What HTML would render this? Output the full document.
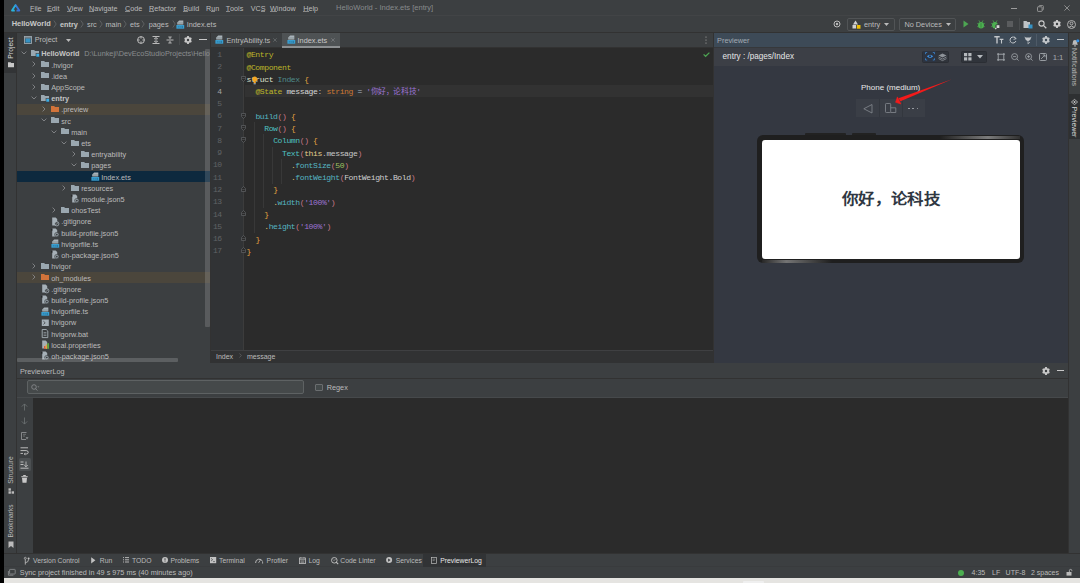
<!DOCTYPE html>
<html lang="zh-CN"><head><meta charset="utf-8">
<style>
*{margin:0;padding:0;box-sizing:border-box}
html,body{width:1080px;height:583px;overflow:hidden;background:#3c3f41}
body{position:relative;font-family:"Liberation Sans",sans-serif;font-size:7.3px;color:#bbbbbb}
.a{position:absolute}
.t{position:absolute;white-space:nowrap}
.mono{font-family:"Liberation Mono",monospace}
svg{position:absolute;overflow:visible}
u{text-decoration:none;position:relative}u:after{content:'';position:absolute;left:0;right:0;bottom:0.9px;height:0.6px;background:#8a8a8a}
</style></head><body>

<div class="a" style="left:0px;top:0px;width:4.3px;height:583px;background:#000;"></div>
<div class="a" style="left:4px;top:0px;width:1076px;height:16px;background:#3c3f41;"></div>
<div class="a" style="left:4px;top:15px;width:1076px;height:1.6px;background:#424446;"></div>
<div class="a" style="left:4px;top:16px;width:1076px;height:16px;background:#3c3f41;"></div>
<div class="a" style="left:4px;top:32px;width:1076px;height:1px;background:#323232;"></div>
<div class="a" style="left:4px;top:33px;width:12px;height:520px;background:#3c3f41;"></div>
<div class="a" style="left:4px;top:33px;width:12px;height:40px;background:#323436;"></div>
<div class="a" style="left:16px;top:33px;width:1px;height:520px;background:#323232;"></div>
<div class="a" style="left:1068px;top:33px;width:12px;height:520px;background:#3c3f41;"></div>
<div class="a" style="left:1068px;top:33px;width:1px;height:520px;background:#323232;"></div>
<div class="a" style="left:1069px;top:94px;width:11px;height:45px;background:#2e3032;"></div>
<div class="a" style="left:17px;top:33px;width:193px;height:14px;background:#3c3f41;"></div>
<div class="a" style="left:17px;top:47px;width:193px;height:316px;background:#3c3f41;"></div>
<div class="a" style="left:210px;top:33px;width:1px;height:330px;background:#323232;"></div>
<div class="a" style="left:211px;top:33px;width:502px;height:14px;background:#3c3f41;"></div>
<div class="a" style="left:211px;top:47px;width:502px;height:1px;background:#323232;"></div>
<div class="a" style="left:211px;top:48px;width:502px;height:302px;background:#2b2b2b;"></div>
<div class="a" style="left:211px;top:48px;width:33px;height:302px;background:#313335;"></div>
<div class="a" style="left:243px;top:48px;width:1px;height:302px;background:#3c3c3c;"></div>
<div class="a" style="left:211px;top:350px;width:502px;height:1px;background:#3f4042;"></div>
<div class="a" style="left:211px;top:351px;width:502px;height:12.5px;background:#313233;"></div>
<div class="a" style="left:713px;top:33px;width:1px;height:330px;background:#323232;"></div>
<div class="a" style="left:714px;top:33px;width:354px;height:14px;background:#3d4a57;"></div>
<div class="a" style="left:714px;top:47px;width:354px;height:18px;background:#3c3f41;"></div>
<div class="a" style="left:714px;top:65px;width:354px;height:298.5px;background:#343841;"></div>
<div class="a" style="left:17px;top:363px;width:1051px;height:15px;background:#3c3f41;"></div>
<div class="a" style="left:17px;top:378px;width:1051px;height:1px;background:#323232;"></div>
<div class="a" style="left:17px;top:379px;width:1051px;height:18px;background:#3c3f41;"></div>
<div class="a" style="left:17px;top:397px;width:1051px;height:1px;background:#46494b;"></div>
<div class="a" style="left:17px;top:398px;width:16px;height:155px;background:#3c3f41;"></div>
<div class="a" style="left:33px;top:398px;width:1035px;height:155px;background:#2b2b2b;"></div>
<div class="a" style="left:4px;top:553px;width:1076px;height:1px;background:#323232;"></div>
<div class="a" style="left:4px;top:554px;width:1076px;height:13px;background:#3c3f41;"></div>
<div class="a" style="left:4px;top:566.3px;width:1076px;height:0.8px;background:#393b3d;"></div>
<div class="a" style="left:4px;top:567px;width:1076px;height:11px;background:#3c3f41;"></div>
<div class="a" style="left:4px;top:577.6px;width:1076px;height:0.8px;background:#2e3032;"></div>
<div class="a" style="left:4px;top:578.3px;width:1076px;height:4.7px;background:#e5e4e1;"></div>
<div class="a" style="left:743px;top:581px;width:20.7px;height:2px;background:#efefef;border-radius:1px 1px 0 0"></div>
<div class="a" style="left:0;top:0;width:210px;height:363px;overflow:hidden">
<div class="a" style="left:17px;top:103.85px;width:193px;height:11.1px;background:#4b463c;"></div>
<div class="a" style="left:17px;top:171.11px;width:193px;height:11.1px;background:#0d293e;"></div>
<div class="a" style="left:17px;top:272.00000000000006px;width:193px;height:11.1px;background:#4b463c;"></div>
<div class="a" style="left:205.3px;top:49px;width:4.4px;height:278px;background:rgba(255,255,255,0.15);border-radius:1px"></div>
<svg style="left:20.8px;top:51.099999999999994px;" width="6" height="4" viewBox="0 0 6 4"><path d="M0.6 0.6 L3 3 L5.4 0.6" fill="none" stroke="#8f9194" stroke-width="0.8"/></svg>
<svg style="left:31px;top:49.0px;" width="9" height="9" viewBox="0 0 9 9"><path d="M0 1 H3.2 L4 2 H8 V7 H0 Z" fill="#9aa7b0"/><rect x="5" y="4.6" width="3.4" height="3.4" fill="#3ab0e8" stroke="#3c3f41" stroke-width="0.6"/></svg>
<div class="t" style="left:41.20px;top:50.32px;font-size:7.3px;line-height:7.3px;color:#c4c4c4;"><b>HelloWorld</b></div>
<div class="t" style="left:84.20px;top:50.32px;font-size:7.3px;line-height:7.3px;color:#8a8d8f;">D:\Lunkeji\DevEcoStudioProjects\HelloWorld</div>
<svg style="left:31.8px;top:61.410000000000004px;" width="4" height="6" viewBox="0 0 4 6"><path d="M0.6 0.6 L3 3 L0.6 5.4" fill="none" stroke="#8f9194" stroke-width="0.8"/></svg>
<svg style="left:41px;top:60.21px;" width="9" height="9" viewBox="0 0 9 9"><path d="M0 1 H3.2 L4 2 H8 V7 H0 Z" fill="#9aa7b0"/></svg>
<div class="t" style="left:51.20px;top:61.53px;font-size:7.3px;line-height:7.3px;color:#bbbbbb;">.hvigor</div>
<svg style="left:31.8px;top:72.62px;" width="4" height="6" viewBox="0 0 4 6"><path d="M0.6 0.6 L3 3 L0.6 5.4" fill="none" stroke="#8f9194" stroke-width="0.8"/></svg>
<svg style="left:41px;top:71.41999999999999px;" width="9" height="9" viewBox="0 0 9 9"><path d="M0 1 H3.2 L4 2 H8 V7 H0 Z" fill="#9aa7b0"/></svg>
<div class="t" style="left:51.20px;top:72.74px;font-size:7.3px;line-height:7.3px;color:#bbbbbb;">.idea</div>
<svg style="left:31.8px;top:83.83000000000001px;" width="4" height="6" viewBox="0 0 4 6"><path d="M0.6 0.6 L3 3 L0.6 5.4" fill="none" stroke="#8f9194" stroke-width="0.8"/></svg>
<svg style="left:41px;top:82.63px;" width="9" height="9" viewBox="0 0 9 9"><path d="M0 1 H3.2 L4 2 H8 V7 H0 Z" fill="#9aa7b0"/></svg>
<div class="t" style="left:51.20px;top:83.95px;font-size:7.3px;line-height:7.3px;color:#bbbbbb;">AppScope</div>
<svg style="left:30.8px;top:95.94000000000001px;" width="6" height="4" viewBox="0 0 6 4"><path d="M0.6 0.6 L3 3 L5.4 0.6" fill="none" stroke="#8f9194" stroke-width="0.8"/></svg>
<svg style="left:41px;top:93.84px;" width="9" height="9" viewBox="0 0 9 9"><path d="M0 1 H3.2 L4 2 H8 V7 H0 Z" fill="#9aa7b0"/><rect x="5" y="4.6" width="3.4" height="3.4" fill="#3ab0e8" stroke="#3c3f41" stroke-width="0.6"/></svg>
<div class="t" style="left:51.20px;top:95.16px;font-size:7.3px;line-height:7.3px;color:#c4c4c4;"><b>entry</b></div>
<svg style="left:41.8px;top:106.25000000000001px;" width="4" height="6" viewBox="0 0 4 6"><path d="M0.6 0.6 L3 3 L0.6 5.4" fill="none" stroke="#8f9194" stroke-width="0.8"/></svg>
<svg style="left:51px;top:105.05px;" width="9" height="9" viewBox="0 0 9 9"><path d="M0 1 H3.2 L4 2 H8 V7 H0 Z" fill="#d2733a"/></svg>
<div class="t" style="left:61.20px;top:106.37px;font-size:7.3px;line-height:7.3px;color:#bbbbbb;">.preview</div>
<svg style="left:40.8px;top:118.36px;" width="6" height="4" viewBox="0 0 6 4"><path d="M0.6 0.6 L3 3 L5.4 0.6" fill="none" stroke="#8f9194" stroke-width="0.8"/></svg>
<svg style="left:51px;top:116.25999999999999px;" width="9" height="9" viewBox="0 0 9 9"><path d="M0 1 H3.2 L4 2 H8 V7 H0 Z" fill="#9aa7b0"/></svg>
<div class="t" style="left:61.20px;top:117.58px;font-size:7.3px;line-height:7.3px;color:#bbbbbb;">src</div>
<svg style="left:50.8px;top:129.57000000000002px;" width="6" height="4" viewBox="0 0 6 4"><path d="M0.6 0.6 L3 3 L5.4 0.6" fill="none" stroke="#8f9194" stroke-width="0.8"/></svg>
<svg style="left:61px;top:127.47px;" width="9" height="9" viewBox="0 0 9 9"><path d="M0 1 H3.2 L4 2 H8 V7 H0 Z" fill="#9aa7b0"/></svg>
<div class="t" style="left:71.20px;top:128.79px;font-size:7.3px;line-height:7.3px;color:#bbbbbb;">main</div>
<svg style="left:60.8px;top:140.78000000000003px;" width="6" height="4" viewBox="0 0 6 4"><path d="M0.6 0.6 L3 3 L5.4 0.6" fill="none" stroke="#8f9194" stroke-width="0.8"/></svg>
<svg style="left:71px;top:138.68px;" width="9" height="9" viewBox="0 0 9 9"><path d="M0 1 H3.2 L4 2 H8 V7 H0 Z" fill="#9aa7b0"/></svg>
<div class="t" style="left:81.20px;top:140.00px;font-size:7.3px;line-height:7.3px;color:#bbbbbb;">ets</div>
<svg style="left:71.8px;top:151.09000000000003px;" width="4" height="6" viewBox="0 0 4 6"><path d="M0.6 0.6 L3 3 L0.6 5.4" fill="none" stroke="#8f9194" stroke-width="0.8"/></svg>
<svg style="left:81px;top:149.89000000000001px;" width="9" height="9" viewBox="0 0 9 9"><path d="M0 1 H3.2 L4 2 H8 V7 H0 Z" fill="#9aa7b0"/></svg>
<div class="t" style="left:91.20px;top:151.21px;font-size:7.3px;line-height:7.3px;color:#bbbbbb;">entryability</div>
<svg style="left:70.8px;top:163.20000000000002px;" width="6" height="4" viewBox="0 0 6 4"><path d="M0.6 0.6 L3 3 L5.4 0.6" fill="none" stroke="#8f9194" stroke-width="0.8"/></svg>
<svg style="left:81px;top:161.1px;" width="9" height="9" viewBox="0 0 9 9"><path d="M0 1 H3.2 L4 2 H8 V7 H0 Z" fill="#9aa7b0"/></svg>
<div class="t" style="left:91.20px;top:162.42px;font-size:7.3px;line-height:7.3px;color:#bbbbbb;">pages</div>
<svg style="left:91px;top:172.01px;" width="9" height="10" viewBox="0 0 9 10"><path d="M3.2 0.6 H7.3 V4.6 H1.2 V2.5 Z" fill="#a9b3ba"/><path d="M1.5 2.6 H7 M1.5 3.7 H7" stroke="#7b858c" stroke-width="0.4"/><rect x="0.4" y="5" width="7.8" height="3.7" fill="#3a9fd1"/><path d="M1.8 6.9 H3.2 M4.2 6.3 V7.6 M5.6 6.4 H6.9 M5.6 7.4 H6.9" stroke="#1f5c7c" stroke-width="0.6"/></svg>
<div class="t" style="left:101.20px;top:173.63px;font-size:7.3px;line-height:7.3px;color:#bbbbbb;">Index.ets</div>
<svg style="left:61.8px;top:184.72000000000003px;" width="4" height="6" viewBox="0 0 4 6"><path d="M0.6 0.6 L3 3 L0.6 5.4" fill="none" stroke="#8f9194" stroke-width="0.8"/></svg>
<svg style="left:71px;top:183.52px;" width="9" height="9" viewBox="0 0 9 9"><path d="M0 1 H3.2 L4 2 H8 V7 H0 Z" fill="#9aa7b0"/></svg>
<div class="t" style="left:81.20px;top:184.84px;font-size:7.3px;line-height:7.3px;color:#bbbbbb;">resources</div>
<svg style="left:71px;top:194.43px;" width="9" height="10" viewBox="0 0 9 10"><path d="M1.2 0.5 H4.6 L6.2 2.1 V8.6 H1.2 Z" fill="#a6b0b7"/><path d="M1.2 0.5 V2.6 H0" stroke="#3c3f41" stroke-width="0.5"/><circle cx="5.8" cy="6.6" r="2.2" fill="#8e989f" stroke="#3c3f41" stroke-width="0.6"/><circle cx="5.8" cy="6.6" r="0.9" fill="#3c3f41"/></svg>
<div class="t" style="left:81.20px;top:196.05px;font-size:7.3px;line-height:7.3px;color:#bbbbbb;">module.json5</div>
<svg style="left:51.8px;top:207.14000000000001px;" width="4" height="6" viewBox="0 0 4 6"><path d="M0.6 0.6 L3 3 L0.6 5.4" fill="none" stroke="#8f9194" stroke-width="0.8"/></svg>
<svg style="left:61px;top:205.94px;" width="9" height="9" viewBox="0 0 9 9"><path d="M0 1 H3.2 L4 2 H8 V7 H0 Z" fill="#9aa7b0"/></svg>
<div class="t" style="left:71.20px;top:207.26px;font-size:7.3px;line-height:7.3px;color:#bbbbbb;">ohosTest</div>
<svg style="left:51px;top:216.85px;" width="9" height="10" viewBox="0 0 9 10"><path d="M1.2 0.5 H4.6 L6.2 2.1 V8.6 H1.2 Z" fill="#a6b0b7"/><circle cx="5.8" cy="6.8" r="2.1" fill="#3c3f41" stroke="#a6b0b7" stroke-width="0.8"/><path d="M4.5 8 L7.1 5.6" stroke="#a6b0b7" stroke-width="0.7"/></svg>
<div class="t" style="left:61.20px;top:218.47px;font-size:7.3px;line-height:7.3px;color:#bbbbbb;">.gitignore</div>
<svg style="left:51px;top:228.06px;" width="9" height="10" viewBox="0 0 9 10"><path d="M1.2 0.5 H4.6 L6.2 2.1 V8.6 H1.2 Z" fill="#a6b0b7"/><path d="M1.2 0.5 V2.6 H0" stroke="#3c3f41" stroke-width="0.5"/><circle cx="5.8" cy="6.6" r="2.2" fill="#8e989f" stroke="#3c3f41" stroke-width="0.6"/><circle cx="5.8" cy="6.6" r="0.9" fill="#3c3f41"/></svg>
<div class="t" style="left:61.20px;top:229.68px;font-size:7.3px;line-height:7.3px;color:#bbbbbb;">build-profile.json5</div>
<svg style="left:51px;top:239.27px;" width="9" height="10" viewBox="0 0 9 10"><path d="M3.2 0.6 H7.3 V4.6 H1.2 V2.5 Z" fill="#a9b3ba"/><path d="M1.5 2.6 H7 M1.5 3.7 H7" stroke="#7b858c" stroke-width="0.4"/><rect x="0.4" y="5" width="7.8" height="3.7" fill="#3a9fd1"/><path d="M1.8 6.9 H3.2 M4.2 6.3 V7.6 M5.6 6.4 H6.9 M5.6 7.4 H6.9" stroke="#1f5c7c" stroke-width="0.6"/></svg>
<div class="t" style="left:61.20px;top:240.89px;font-size:7.3px;line-height:7.3px;color:#bbbbbb;">hvigorfile.ts</div>
<svg style="left:51px;top:250.48px;" width="9" height="10" viewBox="0 0 9 10"><path d="M1.2 0.5 H4.6 L6.2 2.1 V8.6 H1.2 Z" fill="#a6b0b7"/><path d="M1.2 0.5 V2.6 H0" stroke="#3c3f41" stroke-width="0.5"/><circle cx="5.8" cy="6.6" r="2.2" fill="#8e989f" stroke="#3c3f41" stroke-width="0.6"/><circle cx="5.8" cy="6.6" r="0.9" fill="#3c3f41"/></svg>
<div class="t" style="left:61.20px;top:252.10px;font-size:7.3px;line-height:7.3px;color:#bbbbbb;">oh-package.json5</div>
<svg style="left:31.8px;top:263.18999999999994px;" width="4" height="6" viewBox="0 0 4 6"><path d="M0.6 0.6 L3 3 L0.6 5.4" fill="none" stroke="#8f9194" stroke-width="0.8"/></svg>
<svg style="left:41px;top:261.99px;" width="9" height="9" viewBox="0 0 9 9"><path d="M0 1 H3.2 L4 2 H8 V7 H0 Z" fill="#9aa7b0"/></svg>
<div class="t" style="left:51.20px;top:263.31px;font-size:7.3px;line-height:7.3px;color:#bbbbbb;">hvigor</div>
<svg style="left:31.8px;top:274.4px;" width="4" height="6" viewBox="0 0 4 6"><path d="M0.6 0.6 L3 3 L0.6 5.4" fill="none" stroke="#8f9194" stroke-width="0.8"/></svg>
<svg style="left:41px;top:273.20000000000005px;" width="9" height="9" viewBox="0 0 9 9"><path d="M0 1 H3.2 L4 2 H8 V7 H0 Z" fill="#d2733a"/></svg>
<div class="t" style="left:51.20px;top:274.52px;font-size:7.3px;line-height:7.3px;color:#bbbbbb;">oh_modules</div>
<svg style="left:41px;top:284.11px;" width="9" height="10" viewBox="0 0 9 10"><path d="M1.2 0.5 H4.6 L6.2 2.1 V8.6 H1.2 Z" fill="#a6b0b7"/><circle cx="5.8" cy="6.8" r="2.1" fill="#3c3f41" stroke="#a6b0b7" stroke-width="0.8"/><path d="M4.5 8 L7.1 5.6" stroke="#a6b0b7" stroke-width="0.7"/></svg>
<div class="t" style="left:51.20px;top:285.73px;font-size:7.3px;line-height:7.3px;color:#bbbbbb;">.gitignore</div>
<svg style="left:41px;top:295.32px;" width="9" height="10" viewBox="0 0 9 10"><path d="M1.2 0.5 H4.6 L6.2 2.1 V8.6 H1.2 Z" fill="#a6b0b7"/><path d="M1.2 0.5 V2.6 H0" stroke="#3c3f41" stroke-width="0.5"/><circle cx="5.8" cy="6.6" r="2.2" fill="#8e989f" stroke="#3c3f41" stroke-width="0.6"/><circle cx="5.8" cy="6.6" r="0.9" fill="#3c3f41"/></svg>
<div class="t" style="left:51.20px;top:296.94px;font-size:7.3px;line-height:7.3px;color:#bbbbbb;">build-profile.json5</div>
<svg style="left:41px;top:306.53000000000003px;" width="9" height="10" viewBox="0 0 9 10"><path d="M3.2 0.6 H7.3 V4.6 H1.2 V2.5 Z" fill="#a9b3ba"/><path d="M1.5 2.6 H7 M1.5 3.7 H7" stroke="#7b858c" stroke-width="0.4"/><rect x="0.4" y="5" width="7.8" height="3.7" fill="#3a9fd1"/><path d="M1.8 6.9 H3.2 M4.2 6.3 V7.6 M5.6 6.4 H6.9 M5.6 7.4 H6.9" stroke="#1f5c7c" stroke-width="0.6"/></svg>
<div class="t" style="left:51.20px;top:308.15px;font-size:7.3px;line-height:7.3px;color:#bbbbbb;">hvigorfile.ts</div>
<svg style="left:41px;top:317.74px;" width="9" height="10" viewBox="0 0 9 10"><rect x="0.8" y="1.5" width="7" height="6.5" fill="#a6b0b7"/><path d="M2.4 3.2 L4.2 4.8 L2.4 6.4" fill="none" stroke="#3c3f41" stroke-width="0.8"/></svg>
<div class="t" style="left:51.20px;top:319.36px;font-size:7.3px;line-height:7.3px;color:#bbbbbb;">hvigorw</div>
<svg style="left:41px;top:328.95px;" width="9" height="10" viewBox="0 0 9 10"><path d="M1.2 0.5 H5.2 L6.8 2.1 V8.6 H1.2 Z" fill="none" stroke="#a6b0b7" stroke-width="0.9"/><path d="M2.6 3.5 H5.4 M2.6 5 H5.4 M2.6 6.5 H5.4" stroke="#a6b0b7" stroke-width="0.6"/></svg>
<div class="t" style="left:51.20px;top:330.57px;font-size:7.3px;line-height:7.3px;color:#bbbbbb;">hvigorw.bat</div>
<svg style="left:41px;top:340.16px;" width="9" height="10" viewBox="0 0 9 10"><path d="M1.2 0.5 H4.6 L6.2 2.1 V8.6 H1.2 Z" fill="#a6b0b7"/><rect x="3" y="6" width="1.5" height="2.8" fill="#e05a3a"/><rect x="4.7" y="4.6" width="1.5" height="4.2" fill="#e9a23b"/><rect x="6.4" y="3.2" width="1.5" height="5.6" fill="#62b543"/></svg>
<div class="t" style="left:51.20px;top:341.78px;font-size:7.3px;line-height:7.3px;color:#bbbbbb;">local.properties</div>
<svg style="left:41px;top:351.37px;" width="9" height="10" viewBox="0 0 9 10"><path d="M1.2 0.5 H4.6 L6.2 2.1 V8.6 H1.2 Z" fill="#a6b0b7"/><path d="M1.2 0.5 V2.6 H0" stroke="#3c3f41" stroke-width="0.5"/><circle cx="5.8" cy="6.6" r="2.2" fill="#8e989f" stroke="#3c3f41" stroke-width="0.6"/><circle cx="5.8" cy="6.6" r="0.9" fill="#3c3f41"/></svg>
<div class="t" style="left:51.20px;top:352.99px;font-size:7.3px;line-height:7.3px;color:#bbbbbb;">oh-package.json5</div>
<div class="a" style="left:17px;top:357.6px;width:160.5px;height:4.6px;background:rgba(255,255,255,0.17);border-radius:1px"></div>
</div>
<svg style="left:24px;top:36.3px;" width="8" height="8" viewBox="0 0 8 8"><rect x="0.5" y="0.5" width="7" height="7" fill="none" stroke="#9aa7b0" stroke-width="0.9"/><rect x="1.4" y="2.4" width="5.2" height="4.2" fill="#3592c4"/><path d="M0.5 1.8 H7.5" stroke="#9aa7b0" stroke-width="0.9"/></svg>
<div class="t" style="left:34.70px;top:36.42px;font-size:7.3px;line-height:7.3px;color:#bbbbbb;">Project</div>
<svg style="left:66px;top:39px;" width="5" height="3" viewBox="0 0 5 3"><path d="M0 0 H5 L2.5 3 Z" fill="#bbb"/></svg>
<svg style="left:137px;top:35.5px;" width="8" height="8" viewBox="0 0 8 8"><circle cx="4" cy="4" r="3.4" fill="none" stroke="#c8c8c8" stroke-width="0.9"/><path d="M4 0.6 V2.6 M4 5.4 V7.4 M0.6 4 H2.6 M5.4 4 H7.4" stroke="#c8c8c8" stroke-width="0.9"/></svg>
<svg style="left:151.5px;top:35.5px;" width="8" height="8" viewBox="0 0 8 8"><path d="M0.5 0.5 H7.5 M0.5 7.5 H7.5" stroke="#c8c8c8" stroke-width="0.9"/><path d="M2 3 L4 1.6 L6 3 M2 5 L4 6.4 L6 5 M4 1.6 V6.4" fill="none" stroke="#c8c8c8" stroke-width="0.8"/></svg>
<svg style="left:165.7px;top:35.5px;" width="8" height="8" viewBox="0 0 8 8"><path d="M0.5 4 H7.5" stroke="#c8c8c8" stroke-width="0.9"/><path d="M2.3 0.8 L4 2.4 L5.7 0.8 M2.3 7.2 L4 5.6 L5.7 7.2 M4 0 V2.4 M4 5.6 V8" fill="none" stroke="#c8c8c8" stroke-width="0.8"/></svg>
<div class="a" style="left:178.5px;top:34px;width:1px;height:11px;background:#4a4d4f;"></div>
<svg style="left:184px;top:35.5px;" width="8" height="8" viewBox="0 0 8 8"><polygon points="2.55,1.49 3.24,0.07 4.76,0.07 5.45,1.49 7.02,1.38 7.78,2.70 6.90,4.00 7.78,5.30 7.02,6.62 5.45,6.51 4.76,7.93 3.24,7.93 2.55,6.51 0.98,6.62 0.22,5.30 1.10,4.00 0.22,2.70 0.98,1.38" fill="#c8c8c8"/><circle cx="4" cy="4" r="1.2" fill="#3c3f41"/></svg>
<div class="a" style="left:199px;top:39px;width:7.5px;height:1px;background:#c8c8c8;"></div>
<svg style="left:215.3px;top:35.2px;" width="9" height="10" viewBox="0 0 9 10"><path d="M3.2 0.6 H7.3 V4.6 H1.2 V2.5 Z" fill="#a9b3ba"/><path d="M1.5 2.6 H7 M1.5 3.7 H7" stroke="#7b858c" stroke-width="0.4"/><rect x="0.4" y="5" width="7.8" height="3.7" fill="#3a9fd1"/><path d="M1.8 6.9 H3.2 M4.2 6.3 V7.6 M5.6 6.4 H6.9 M5.6 7.4 H6.9" stroke="#1f5c7c" stroke-width="0.6"/></svg>
<div class="t" style="left:226.50px;top:37.02px;font-size:7.3px;line-height:7.3px;color:#bbbbbb;">EntryAbility.ts</div>
<svg style="left:273.3px;top:37.8px;" width="4" height="4" viewBox="0 0 4 4"><path d="M0.3 0.3 L3.7 3.7 M3.7 0.3 L0.3 3.7" stroke="#6f7274" stroke-width="0.7"/></svg>
<div class="a" style="left:282px;top:33px;width:57.6px;height:14px;background:#4e5254;"></div>
<div class="a" style="left:282px;top:46px;width:57.6px;height:1.5px;background:#8c8f91;"></div>
<svg style="left:286.7px;top:35.2px;" width="9" height="10" viewBox="0 0 9 10"><path d="M3.2 0.6 H7.3 V4.6 H1.2 V2.5 Z" fill="#a9b3ba"/><path d="M1.5 2.6 H7 M1.5 3.7 H7" stroke="#7b858c" stroke-width="0.4"/><rect x="0.4" y="5" width="7.8" height="3.7" fill="#3a9fd1"/><path d="M1.8 6.9 H3.2 M4.2 6.3 V7.6 M5.6 6.4 H6.9 M5.6 7.4 H6.9" stroke="#1f5c7c" stroke-width="0.6"/></svg>
<div class="t" style="left:297.60px;top:37.02px;font-size:7.3px;line-height:7.3px;color:#c8c8c8;">Index.ets</div>
<svg style="left:331px;top:37.8px;" width="4" height="4" viewBox="0 0 4 4"><path d="M0.3 0.3 L3.7 3.7 M3.7 0.3 L0.3 3.7" stroke="#7d8082" stroke-width="0.7"/></svg>
<svg style="left:705.2px;top:36.2px;" width="2" height="8" viewBox="0 0 2 8"><circle cx="1" cy="1" r="0.6" fill="#b0b0b0"/><circle cx="1" cy="4" r="0.6" fill="#b0b0b0"/><circle cx="1" cy="7" r="0.6" fill="#b0b0b0"/></svg>
<div class="a" style="left:245px;top:84.74px;width:468px;height:12.2px;background:#323232;"></div>
<div class="a" style="left:254.3px;top:122.18px;width:0.8px;height:110.53999999999996px;background:#383838;"></div>
<div class="a" style="left:263.2px;top:134.46px;width:0.8px;height:73.69999999999996px;background:#383838;"></div>
<div class="a" style="left:272.1px;top:146.74px;width:0.8px;height:36.859999999999985px;background:#383838;"></div>
<div class="a" style="left:281.0px;top:159.02px;width:0.8px;height:24.579999999999984px;background:#383838;"></div>
<div class="t mono" style="left:217.36px;top:50.97px;font-size:8.0px;line-height:8.0px;color:#606366;letter-spacing:-0.36px">1</div>
<div class="t mono" style="left:217.36px;top:63.25px;font-size:8.0px;line-height:8.0px;color:#606366;letter-spacing:-0.36px">2</div>
<div class="t mono" style="left:217.36px;top:75.53px;font-size:8.0px;line-height:8.0px;color:#606366;letter-spacing:-0.36px">3</div>
<div class="t mono" style="left:217.36px;top:87.81px;font-size:8.0px;line-height:8.0px;color:#a4a3a3;letter-spacing:-0.36px">4</div>
<div class="t mono" style="left:217.36px;top:100.09px;font-size:8.0px;line-height:8.0px;color:#606366;letter-spacing:-0.36px">5</div>
<div class="t mono" style="left:217.36px;top:112.37px;font-size:8.0px;line-height:8.0px;color:#606366;letter-spacing:-0.36px">6</div>
<div class="t mono" style="left:217.36px;top:124.65px;font-size:8.0px;line-height:8.0px;color:#606366;letter-spacing:-0.36px">7</div>
<div class="t mono" style="left:217.36px;top:136.93px;font-size:8.0px;line-height:8.0px;color:#606366;letter-spacing:-0.36px">8</div>
<div class="t mono" style="left:217.36px;top:149.21px;font-size:8.0px;line-height:8.0px;color:#606366;letter-spacing:-0.36px">9</div>
<div class="t mono" style="left:212.92px;top:161.49px;font-size:8.0px;line-height:8.0px;color:#606366;letter-spacing:-0.36px">10</div>
<div class="t mono" style="left:212.92px;top:173.77px;font-size:8.0px;line-height:8.0px;color:#606366;letter-spacing:-0.36px">11</div>
<div class="t mono" style="left:212.92px;top:186.05px;font-size:8.0px;line-height:8.0px;color:#606366;letter-spacing:-0.36px">12</div>
<div class="t mono" style="left:212.92px;top:198.33px;font-size:8.0px;line-height:8.0px;color:#606366;letter-spacing:-0.36px">13</div>
<div class="t mono" style="left:212.92px;top:210.61px;font-size:8.0px;line-height:8.0px;color:#606366;letter-spacing:-0.36px">14</div>
<div class="t mono" style="left:212.92px;top:222.89px;font-size:8.0px;line-height:8.0px;color:#606366;letter-spacing:-0.36px">15</div>
<div class="t mono" style="left:212.92px;top:235.17px;font-size:8.0px;line-height:8.0px;color:#606366;letter-spacing:-0.36px">16</div>
<div class="t mono" style="left:212.92px;top:247.45px;font-size:8.0px;line-height:8.0px;color:#606366;letter-spacing:-0.36px">17</div>
<svg style="left:241px;top:75.66px;" width="5" height="6" viewBox="0 0 5 6"><path d="M0.5 0.5 H4.5 V3.5 L2.5 5.5 L0.5 3.5 Z" fill="#2b2b2b" stroke="#6a6d70" stroke-width="0.6"/><path d="M1.3 2.5 H3.7" stroke="#6a6d70" stroke-width="0.5"/></svg>
<svg style="left:241px;top:112.5px;" width="5" height="6" viewBox="0 0 5 6"><path d="M0.5 0.5 H4.5 V3.5 L2.5 5.5 L0.5 3.5 Z" fill="#2b2b2b" stroke="#6a6d70" stroke-width="0.6"/><path d="M1.3 2.5 H3.7" stroke="#6a6d70" stroke-width="0.5"/></svg>
<svg style="left:241px;top:124.78px;" width="5" height="6" viewBox="0 0 5 6"><path d="M0.5 0.5 H4.5 V3.5 L2.5 5.5 L0.5 3.5 Z" fill="#2b2b2b" stroke="#6a6d70" stroke-width="0.6"/><path d="M1.3 2.5 H3.7" stroke="#6a6d70" stroke-width="0.5"/></svg>
<svg style="left:241px;top:137.06px;" width="5" height="6" viewBox="0 0 5 6"><path d="M0.5 0.5 H4.5 V3.5 L2.5 5.5 L0.5 3.5 Z" fill="#2b2b2b" stroke="#6a6d70" stroke-width="0.6"/><path d="M1.3 2.5 H3.7" stroke="#6a6d70" stroke-width="0.5"/></svg>
<svg style="left:241px;top:185.67999999999998px;" width="5" height="6" viewBox="0 0 5 6"><path d="M0.5 5.5 H4.5 V2.5 L2.5 0.5 L0.5 2.5 Z" fill="#2b2b2b" stroke="#6a6d70" stroke-width="0.6"/><path d="M1.3 3.5 H3.7" stroke="#6a6d70" stroke-width="0.5"/></svg>
<svg style="left:241px;top:210.23999999999998px;" width="5" height="6" viewBox="0 0 5 6"><path d="M0.5 5.5 H4.5 V2.5 L2.5 0.5 L0.5 2.5 Z" fill="#2b2b2b" stroke="#6a6d70" stroke-width="0.6"/><path d="M1.3 3.5 H3.7" stroke="#6a6d70" stroke-width="0.5"/></svg>
<svg style="left:241px;top:234.79999999999998px;" width="5" height="6" viewBox="0 0 5 6"><path d="M0.5 5.5 H4.5 V2.5 L2.5 0.5 L0.5 2.5 Z" fill="#2b2b2b" stroke="#6a6d70" stroke-width="0.6"/><path d="M1.3 3.5 H3.7" stroke="#6a6d70" stroke-width="0.5"/></svg>
<svg style="left:241px;top:247.07999999999998px;" width="5" height="6" viewBox="0 0 5 6"><path d="M0.5 5.5 H4.5 V2.5 L2.5 0.5 L0.5 2.5 Z" fill="#2b2b2b" stroke="#6a6d70" stroke-width="0.6"/><path d="M1.3 3.5 H3.7" stroke="#6a6d70" stroke-width="0.5"/></svg>
<div class="t mono" style="left:246.50px;top:51.39px;font-size:8.1px;line-height:8.1px;color:#a9b7c6;letter-spacing:-0.42px"><span style="color:#bbb529;">@Entry</span></div>
<div class="t mono" style="left:246.50px;top:63.67px;font-size:8.1px;line-height:8.1px;color:#a9b7c6;letter-spacing:-0.42px"><span style="color:#bbb529;">@Component</span></div>
<div class="t mono" style="left:246.50px;top:75.95px;font-size:8.1px;line-height:8.1px;color:#a9b7c6;letter-spacing:-0.42px"><span style="color:#dfe0cc;">struct</span> <span style="color:#4f8a8a;">Index</span> <span style="color:#e0a040;">{</span></div>
<div class="t mono" style="left:246.50px;top:88.23px;font-size:8.1px;line-height:8.1px;color:#a9b7c6;letter-spacing:-0.42px">&nbsp;&nbsp;<span style="color:#bbb529;">@State</span> <span style="color:#d6d6d6;">message</span><span style="color:#a9b7c6;">:</span> <span style="color:#cc7832;">string</span> <span style="color:#a9b7c6;">=</span> <span style="color:#9d74d4;">'<span style="font-size:7.75px">你好，论科技</span>'</span></div>
<div class="t mono" style="left:246.50px;top:112.79px;font-size:8.1px;line-height:8.1px;color:#a9b7c6;letter-spacing:-0.42px">&nbsp;&nbsp;<span style="color:#56b6c2;">build</span><span style="color:#c8788a;">()</span> <span style="color:#e0a040;">{</span></div>
<div class="t mono" style="left:246.50px;top:125.07px;font-size:8.1px;line-height:8.1px;color:#a9b7c6;letter-spacing:-0.42px">&nbsp;&nbsp;&nbsp;&nbsp;<span style="color:#4ec1c1;">Row</span><span style="color:#c8788a;">()</span> <span style="color:#e0a040;">{</span></div>
<div class="t mono" style="left:246.50px;top:137.35px;font-size:8.1px;line-height:8.1px;color:#a9b7c6;letter-spacing:-0.42px">&nbsp;&nbsp;&nbsp;&nbsp;&nbsp;&nbsp;<span style="color:#4ec1c1;">Column</span><span style="color:#c8788a;">()</span> <span style="color:#e0a040;">{</span></div>
<div class="t mono" style="left:246.50px;top:149.63px;font-size:8.1px;line-height:8.1px;color:#a9b7c6;letter-spacing:-0.42px">&nbsp;&nbsp;&nbsp;&nbsp;&nbsp;&nbsp;&nbsp;&nbsp;<span style="color:#4ec1c1;">Text</span><span style="color:#c8788a;">(</span><span style="color:#e3cf8c;">this</span><span style="color:#a9b7c6;">.</span><span style="color:#c8c8c8;">message</span><span style="color:#c8788a;">)</span></div>
<div class="t mono" style="left:246.50px;top:161.91px;font-size:8.1px;line-height:8.1px;color:#a9b7c6;letter-spacing:-0.42px">&nbsp;&nbsp;&nbsp;&nbsp;&nbsp;&nbsp;&nbsp;&nbsp;&nbsp;&nbsp;<span style="color:#d8c070;">.</span><span style="color:#56b6c2;">fontSize</span><span style="color:#c8788a;">(</span><span style="color:#a0c060;">50</span><span style="color:#c8788a;">)</span></div>
<div class="t mono" style="left:246.50px;top:174.19px;font-size:8.1px;line-height:8.1px;color:#a9b7c6;letter-spacing:-0.42px">&nbsp;&nbsp;&nbsp;&nbsp;&nbsp;&nbsp;&nbsp;&nbsp;&nbsp;&nbsp;<span style="color:#d8c070;">.</span><span style="color:#56b6c2;">fontWeight</span><span style="color:#c8788a;">(</span><span style="color:#d0d0d0;">FontWeight.Bold</span><span style="color:#c8788a;">)</span></div>
<div class="t mono" style="left:246.50px;top:186.47px;font-size:8.1px;line-height:8.1px;color:#a9b7c6;letter-spacing:-0.42px">&nbsp;&nbsp;&nbsp;&nbsp;&nbsp;&nbsp;<span style="color:#e0a040;">}</span></div>
<div class="t mono" style="left:246.50px;top:198.75px;font-size:8.1px;line-height:8.1px;color:#a9b7c6;letter-spacing:-0.42px">&nbsp;&nbsp;&nbsp;&nbsp;&nbsp;&nbsp;<span style="color:#d8c070;">.</span><span style="color:#56b6c2;">width</span><span style="color:#c8788a;">(</span><span style="color:#9d74d4;">'100%'</span><span style="color:#c8788a;">)</span></div>
<div class="t mono" style="left:246.50px;top:211.03px;font-size:8.1px;line-height:8.1px;color:#a9b7c6;letter-spacing:-0.42px">&nbsp;&nbsp;&nbsp;&nbsp;<span style="color:#e0a040;">}</span></div>
<div class="t mono" style="left:246.50px;top:223.31px;font-size:8.1px;line-height:8.1px;color:#a9b7c6;letter-spacing:-0.42px">&nbsp;&nbsp;&nbsp;&nbsp;<span style="color:#d8c070;">.</span><span style="color:#56b6c2;">height</span><span style="color:#c8788a;">(</span><span style="color:#9d74d4;">'100%'</span><span style="color:#c8788a;">)</span></div>
<div class="t mono" style="left:246.50px;top:235.59px;font-size:8.1px;line-height:8.1px;color:#a9b7c6;letter-spacing:-0.42px">&nbsp;&nbsp;<span style="color:#e0a040;">}</span></div>
<div class="t mono" style="left:246.50px;top:247.87px;font-size:8.1px;line-height:8.1px;color:#a9b7c6;letter-spacing:-0.42px"><span style="color:#e0a040;">}</span></div>
<svg style="left:251.8px;top:75.66px;" width="6" height="9" viewBox="0 0 6 9"><circle cx="2.7" cy="3" r="2.5" fill="#f5a623"/><rect x="1.6" y="5.2" width="2.2" height="1.8" fill="#f5a623"/><rect x="1.6" y="7" width="2.2" height="1.4" fill="#8f96a0"/></svg>
<div class="t" style="left:216.00px;top:352.67px;font-size:7.0px;line-height:7.0px;color:#bbbbbb;">Index</div>
<svg style="left:238.5px;top:353.3px;" width="3" height="5" viewBox="0 0 3 5"><path d="M0.5 0.5 L2.3 2.5 L0.5 4.5" fill="none" stroke="#6b6e70" stroke-width="0.6"/></svg>
<div class="t" style="left:247.00px;top:352.67px;font-size:7.0px;line-height:7.0px;color:#bbbbbb;">message</div>
<svg style="left:703px;top:51.5px;" width="7" height="5" viewBox="0 0 7 5"><path d="M0.6 2.4 L2.6 4.3 L6.4 0.6" fill="none" stroke="#4da552" stroke-width="1.2"/></svg>
<div class="t" style="left:717.10px;top:36.72px;font-size:7.3px;line-height:7.3px;color:#a3abb3;">Previewer</div>
<svg style="left:993.8px;top:36px;" width="10" height="8" viewBox="0 0 10 8"><path d="M0.3 0.7 H5.7 M3 0.7 V7.6" stroke="#c2c6ca" stroke-width="1.4"/><path d="M5.6 3.4 H9.4 M7.5 3.4 V7.6" stroke="#c2c6ca" stroke-width="1.1"/></svg>
<svg style="left:1009px;top:36px;" width="8" height="8" viewBox="0 0 8 8"><path d="M6.6 2.4 A3 3 0 1 0 6.9 5" fill="none" stroke="#c2c6ca" stroke-width="1"/><path d="M5 0.8 L7.2 2.6 L4.6 3.4" fill="none" stroke="#c2c6ca" stroke-width="0.9"/><path d="M1.4 5.6 L0.8 6.6" stroke="#c2c6ca" stroke-width="0.6"/></svg>
<svg style="left:1023.6px;top:36px;" width="8" height="9" viewBox="0 0 8 9"><path d="M0.4 0.6 L1.8 1.6 H6.2 L7.6 0.6 L6.2 4 L4 5.2 L1.8 4 Z" fill="#c2c6ca"/><path d="M4 5.2 V8.2 M4 7.6 L6 6.2" stroke="#c2c6ca" stroke-width="0.7"/></svg>
<div class="a" style="left:1036.3px;top:34px;width:0.8px;height:12px;background:#4e5a67;"></div>
<svg style="left:1042px;top:36.2px;" width="8" height="8" viewBox="0 0 8 8"><polygon points="2.55,1.49 3.24,0.07 4.76,0.07 5.45,1.49 7.02,1.38 7.78,2.70 6.90,4.00 7.78,5.30 7.02,6.62 5.45,6.51 4.76,7.93 3.24,7.93 2.55,6.51 0.98,6.62 0.22,5.30 1.10,4.00 0.22,2.70 0.98,1.38" fill="#c2c6ca"/><circle cx="4" cy="4" r="1.2" fill="#3d4a57"/></svg>
<div class="a" style="left:1057px;top:39.2px;width:7.4px;height:1.1px;background:#c2c6ca;"></div>
<div class="a" style="left:714px;top:47px;width:354px;height:18.5px;background:#3c3f46;"></div>
<div class="a" style="left:714px;top:47px;width:354px;height:1px;background:#36383b;"></div>
<div class="t" style="left:722.60px;top:53.42px;font-size:8.13px;line-height:8.13px;color:#e6e6e6;">entry : /pages/Index</div>
<div class="a" style="left:922.2px;top:50.5px;width:27.2px;height:12px;background:#30343b;border:0.8px solid #2b2e34;border-radius:1.5px"></div>
<div class="a" style="left:923px;top:51.3px;width:13px;height:10.4px;background:#2d3441;"></div>
<svg style="left:924.5px;top:52.3px;" width="10" height="8.5" viewBox="0 0 10 8.5"><path d="M0.5 2.2 V0.5 H2.2 M7.8 0.5 H9.5 V2.2 M9.5 6.3 V8 H7.8 M2.2 8 H0.5 V6.3" fill="none" stroke="#3d8fe0" stroke-width="0.7"/><path d="M1.8 4.25 Q5 1 8.2 4.25 Q5 7.5 1.8 4.25 Z" fill="#3d8fe0"/><circle cx="5" cy="4.25" r="1.1" fill="#2d3441"/></svg>
<svg style="left:938.3px;top:52.5px;" width="9" height="8" viewBox="0 0 9 8"><path d="M4.5 0.5 L8.5 2.5 L4.5 4.5 L0.5 2.5 Z" fill="#8d9298"/><path d="M0.5 4 L4.5 6 L8.5 4 M0.5 5.6 L4.5 7.6 L8.5 5.6" fill="none" stroke="#8d9298" stroke-width="0.8"/></svg>
<div class="a" style="left:960.6px;top:50.5px;width:26.6px;height:12px;background:#30343b;border:0.8px solid #2b2e34;border-radius:1.5px"></div>
<svg style="left:964px;top:53px;" width="8" height="8" viewBox="0 0 8 8"><rect x="0" y="0" width="3.2" height="3.2" fill="#b5b9bd"/><rect x="4.3" y="0" width="3.2" height="3.2" fill="#b5b9bd"/><rect x="0" y="4.3" width="3.2" height="3.2" fill="#b5b9bd"/><rect x="4.3" y="4.3" width="3.2" height="3.2" fill="#b5b9bd"/></svg>
<svg style="left:977.3px;top:55.2px;" width="6" height="4" viewBox="0 0 6 4"><path d="M0 0 H6 L3 3.6 Z" fill="#b5b9bd"/></svg>
<svg style="left:997px;top:52.6px;" width="8" height="8" viewBox="0 0 8 8"><rect x="1.2" y="1.2" width="5.6" height="5.6" fill="none" stroke="#a2a7ac" stroke-width="0.9"/><path d="M1.2 0 V1.2 M0 1.2 H1.2 M6.8 0 V1.2 M8 1.2 H6.8 M1.2 8 V6.8 M0 6.8 H1.2 M6.8 8 V6.8 M8 6.8 H6.8" stroke="#a2a7ac" stroke-width="0.9"/></svg>
<svg style="left:1011px;top:52.6px;" width="8" height="8" viewBox="0 0 8 8"><circle cx="3.6" cy="3.6" r="3" fill="none" stroke="#a2a7ac" stroke-width="0.8"/><path d="M2 3.6 H5.2 M5.8 5.8 L7.6 7.6" stroke="#a2a7ac" stroke-width="0.8"/></svg>
<svg style="left:1025px;top:52.6px;" width="8" height="8" viewBox="0 0 8 8"><circle cx="3.6" cy="3.6" r="3" fill="none" stroke="#a2a7ac" stroke-width="0.8"/><path d="M2 3.6 H5.2 M3.6 2 V5.2 M5.8 5.8 L7.6 7.6" stroke="#a2a7ac" stroke-width="0.8"/></svg>
<svg style="left:1039px;top:52.6px;" width="8" height="8" viewBox="0 0 8 8"><rect x="0.5" y="0.5" width="7" height="7" rx="1" fill="none" stroke="#a2a7ac" stroke-width="0.9"/><path d="M2 6 L6 2 M6 2 H3.8 M6 2 V4.2" stroke="#a2a7ac" stroke-width="0.8" fill="none"/></svg>
<div class="t" style="left:1052.80px;top:53.80px;font-size:7.8px;line-height:7.8px;color:#a2a7ac;letter-spacing:-0.2px">1:1</div>
<div class="t" style="left:861.00px;top:84.01px;font-size:8.02px;line-height:8.02px;color:#e8e8e8;">Phone (medium)</div>
<div class="a" style="left:856.3px;top:99.1px;width:68.7px;height:17.7px;background:#3a3e46;"></div>
<div class="a" style="left:879.3px;top:99.1px;width:0.8px;height:17.7px;background:#33373e;"></div>
<div class="a" style="left:902.3px;top:99.1px;width:0.8px;height:17.7px;background:#33373e;"></div>
<svg style="left:862.5px;top:103.6px;" width="10" height="10" viewBox="0 0 10 10"><path d="M9 0.5 V9 L0.8 4.75 Z" fill="none" stroke="#858a90" stroke-width="0.8" stroke-linejoin="round"/></svg>
<svg style="left:884.6px;top:103.2px;" width="12" height="10" viewBox="0 0 12 10"><rect x="0.5" y="0.5" width="5.2" height="9" rx="0.8" fill="none" stroke="#858a90" stroke-width="0.8"/><path d="M5.7 4.8 H10.8 V9.5 H5.7" fill="none" stroke="#858a90" stroke-width="0.8"/></svg>
<div class="a" style="left:908.2px;top:107.8px;width:1.6px;height:1.6px;background:#a6aab0;border-radius:50%"></div>
<div class="a" style="left:912.4000000000001px;top:107.8px;width:1.6px;height:1.6px;background:#a6aab0;border-radius:50%"></div>
<div class="a" style="left:916.6px;top:107.8px;width:1.6px;height:1.6px;background:#a6aab0;border-radius:50%"></div>
<div class="a" style="left:805px;top:133px;width:41px;height:3px;background:#222222;border-radius:1px 1px 0 0"></div>
<div class="a" style="left:852.4px;top:133px;width:23.4px;height:3px;background:#222222;border-radius:1px 1px 0 0"></div>
<div class="a" style="left:757.1px;top:135.4px;width:266.7px;height:128px;background:#1f1f1f;border-radius:6px"></div>
<div class="a" style="left:940px;top:135.6px;width:80px;height:3px;background:linear-gradient(90deg,rgba(200,200,200,0),rgba(200,200,200,0.55) 60%,rgba(200,200,200,0.1));"></div>
<div class="a" style="left:762px;top:259.8px;width:70px;height:3px;background:linear-gradient(90deg,rgba(200,200,200,0.05),rgba(200,200,200,0.5) 35%,rgba(200,200,200,0));"></div>
<div class="a" style="left:761.7px;top:139.5px;width:258.3px;height:119.5px;background:#ffffff;border-radius:3px"></div>
<div class="t" style="left:761.7px;top:138.4px;width:258.3px;height:119.5px;display:flex;align-items:center;justify-content:center;font-size:16.45px;font-weight:bold;color:#2f3742;transform:scaleY(0.93);letter-spacing:0.35px;padding-left:0.35px">你好，论科技</div>
<svg style="left:890px;top:75px;" width="70" height="35" viewBox="0 0 70 35"><path d="M62 4.3 L8.5 23.2 L10.5 26.3 Z" fill="#f41a1a"/><path d="M5.6 27.3 L7.4 21.9 L11 28.9 Z" fill="#f41a1a"/><path d="M5.6 27.3 L7.4 21.9 L10.9 29 Z" fill="none" stroke="#f41a1a" stroke-width="0.6" stroke-linejoin="round"/></svg>
<div class="t" style="left:11px;top:47.8px;font-size:6.9px;line-height:6.9px;color:#d8d8d8;transform:translate(-50%,-50%) rotate(-90deg);">Project</div>
<svg style="left:8px;top:62px;" width="7" height="6" viewBox="0 0 7 6"><path d="M0 0.3 H2.6 L3.3 1.1 H6 V5.2 H0 Z" fill="#c8c8c8"/></svg>
<div class="t" style="left:11px;top:469.7px;font-size:6.8px;line-height:6.8px;color:#bbbbbb;transform:translate(-50%,-50%) rotate(-90deg);">Structure</div>
<svg style="left:7.5px;top:487.5px;" width="7" height="6" viewBox="0 0 7 6"><rect x="0.5" y="0.3" width="2.4" height="2.4" fill="#bbb"/><rect x="0.5" y="3.3" width="2.4" height="2.4" fill="#bbb"/><rect x="3.6" y="3.3" width="2.4" height="2.4" fill="#bbb"/></svg>
<div class="t" style="left:11px;top:521.2px;font-size:6.6px;line-height:6.6px;color:#bbbbbb;transform:translate(-50%,-50%) rotate(-90deg);">Bookmarks</div>
<svg style="left:8px;top:541px;" width="6" height="8" viewBox="0 0 6 8"><path d="M0.5 0.5 H5.5 V7 L3 5 L0.5 7 Z" fill="#bbb"/></svg>
<div class="t" style="left:1074px;top:67.4px;font-size:7.0px;line-height:7.0px;color:#bbbbbb;transform:translate(-50%,-50%) rotate(-90deg);transform:translate(-50%,-50%) rotate(90deg)">Notifications</div>
<svg style="left:1070.8px;top:39px;" width="9" height="8" viewBox="0 0 9 8"><path d="M1 5.8 Q1.8 5 1.8 3.4 Q1.8 1 4 1 Q6.2 1 6.2 3.4 Q6.2 5 7 5.8 Z" fill="#bbb"/><rect x="3" y="6.4" width="2" height="1" fill="#bbb"/><circle cx="6.8" cy="1.7" r="1.5" fill="#3592e6"/></svg>
<svg style="left:1070.8px;top:99px;" width="7" height="6" viewBox="0 0 7 6"><path d="M0.4 3 L3.5 0.4 L6.6 3 L3.5 5.6 Z" fill="none" stroke="#c8c8c8" stroke-width="0.8"/><circle cx="3.5" cy="3" r="1" fill="#c8c8c8"/></svg>
<div class="t" style="left:1074px;top:122px;font-size:6.9px;line-height:6.9px;color:#d8d8d8;transform:translate(-50%,-50%) rotate(-90deg);transform:translate(-50%,-50%) rotate(90deg)">Previewer</div>
<div class="t" style="left:20.00px;top:368.42px;font-size:7.3px;line-height:7.3px;color:#bbbbbb;">PreviewerLog</div>
<svg style="left:1042px;top:367.2px;" width="8" height="8" viewBox="0 0 8 8"><polygon points="2.55,1.49 3.24,0.07 4.76,0.07 5.45,1.49 7.02,1.38 7.78,2.70 6.90,4.00 7.78,5.30 7.02,6.62 5.45,6.51 4.76,7.93 3.24,7.93 2.55,6.51 0.98,6.62 0.22,5.30 1.10,4.00 0.22,2.70 0.98,1.38" fill="#c8c8c8"/><circle cx="4" cy="4" r="1.2" fill="#3c3f41"/></svg>
<div class="a" style="left:1057px;top:370.3px;width:7.4px;height:1.1px;background:#c8c8c8;"></div>
<div class="a" style="left:27.3px;top:380.3px;width:276.6px;height:13.5px;background:#45494a;border:0.8px solid #5e6263;border-radius:2px"></div>
<svg style="left:30.5px;top:383.5px;" width="9" height="8" viewBox="0 0 9 8"><circle cx="3" cy="3" r="2.3" fill="none" stroke="#8b8e90" stroke-width="0.8"/><path d="M4.6 4.6 L6.4 6.6" stroke="#8b8e90" stroke-width="0.8"/><path d="M6.4 2.6 H8.4 L7.4 3.6 Z" fill="#8b8e90"/></svg>
<div class="a" style="left:315px;top:383.6px;width:7.6px;height:7.6px;background:#43494a;border:0.8px solid #6b6e70;border-radius:1px"></div>
<div class="t" style="left:326.70px;top:383.82px;font-size:7.3px;line-height:7.3px;color:#bbbbbb;">Regex</div>
<svg style="left:20.9px;top:402.5px;" width="7" height="8" viewBox="0 0 7 8"><path d="M3.5 7.5 V1 M0.8 3.6 L3.5 0.9 L6.2 3.6" fill="none" stroke="#6f7375" stroke-width="0.8"/></svg>
<svg style="left:20.9px;top:417px;" width="7" height="8" viewBox="0 0 7 8"><path d="M3.5 0.5 V7 M0.8 4.4 L3.5 7.1 L6.2 4.4" fill="none" stroke="#6f7375" stroke-width="0.8"/></svg>
<svg style="left:20.5px;top:431.5px;" width="8" height="8" viewBox="0 0 8 8"><path d="M5.5 0.5 H0.5 V7.5 H5" fill="none" stroke="#8d9092" stroke-width="0.9"/><path d="M2 2.3 H5 M2 4 H4" stroke="#8d9092" stroke-width="0.6"/><path d="M4.6 5.2 L7.5 5.2 L6 7.6 Z" fill="#8d9092"/></svg>
<svg style="left:20px;top:446.5px;" width="9" height="8" viewBox="0 0 9 8"><path d="M0.5 0.8 H8 M0.5 3.6 H6.2 Q8.2 3.6 8.2 5.3 Q8.2 7 6.2 7 H4.6 M0.5 6.4 H3" fill="none" stroke="#c8c8c8" stroke-width="0.9"/><path d="M5.3 5.8 L4.2 7 L5.3 8.2" fill="none" stroke="#c8c8c8" stroke-width="0.7"/></svg>
<div class="a" style="left:18.5px;top:458.4px;width:12.5px;height:12.2px;background:#4c5052;border-radius:1.5px"></div>
<svg style="left:20.4px;top:460.5px;" width="9" height="8" viewBox="0 0 9 8"><path d="M0.5 1 H3.5 M0.5 3.5 H3.5 M0.5 7.2 H8.5" stroke="#c8c8c8" stroke-width="0.9"/><path d="M6 0.5 V5.8 M4.2 4 L6 5.8 L7.8 4" fill="none" stroke="#c8c8c8" stroke-width="0.8"/></svg>
<svg style="left:20.9px;top:474.6px;" width="7" height="8" viewBox="0 0 7 8"><rect x="0.3" y="1.2" width="6.4" height="1" fill="#c8c8c8"/><rect x="2.2" y="0" width="2.6" height="1" fill="#c8c8c8"/><path d="M1 2.8 H6 L5.5 7.8 H1.5 Z" fill="#c8c8c8"/></svg>
<div class="a" style="left:423px;top:554px;width:62.9px;height:13px;background:#313335;"></div>
<div class="t" style="left:33.00px;top:558.34px;font-size:6.8px;line-height:6.8px;color:#bbbbbb;">Version Control</div>
<div class="t" style="left:99.80px;top:558.34px;font-size:6.8px;line-height:6.8px;color:#bbbbbb;">Run</div>
<div class="t" style="left:132.00px;top:558.34px;font-size:6.8px;line-height:6.8px;color:#bbbbbb;">TODO</div>
<div class="t" style="left:170.50px;top:558.34px;font-size:6.8px;line-height:6.8px;color:#bbbbbb;">Problems</div>
<div class="t" style="left:219.00px;top:558.34px;font-size:6.8px;line-height:6.8px;color:#bbbbbb;">Terminal</div>
<div class="t" style="left:266.60px;top:558.34px;font-size:6.8px;line-height:6.8px;color:#bbbbbb;">Profiler</div>
<div class="t" style="left:308.40px;top:558.34px;font-size:6.8px;line-height:6.8px;color:#bbbbbb;">Log</div>
<div class="t" style="left:340.30px;top:558.34px;font-size:6.8px;line-height:6.8px;color:#bbbbbb;">Code Linter</div>
<div class="t" style="left:395.80px;top:558.34px;font-size:6.8px;line-height:6.8px;color:#bbbbbb;">Services</div>
<svg style="left:24px;top:556.5px;" width="6" height="8" viewBox="0 0 6 8"><circle cx="1.3" cy="1.3" r="1" fill="none" stroke="#c2c2c2" stroke-width="0.7"/><path d="M1.3 2.3 V7.6 M1.3 5.8 Q4.6 5.4 4.6 2.3" fill="none" stroke="#c2c2c2" stroke-width="0.8"/><circle cx="4.6" cy="1.6" r="1" fill="#c2c2c2"/></svg>
<svg style="left:91.2px;top:557px;" width="5" height="7" viewBox="0 0 5 7"><path d="M0.2 0.2 L4.4 3.3 L0.2 6.4 Z" fill="#c2c2c2"/></svg>
<svg style="left:123px;top:557px;" width="6" height="6" viewBox="0 0 6 6"><path d="M0 0.6 H1 M0 2.8 H1 M0 5 H1 M2 0.6 H6 M2 2.8 H6 M2 5 H6" stroke="#c2c2c2" stroke-width="0.9"/></svg>
<svg style="left:161.5px;top:556.8px;" width="7" height="7" viewBox="0 0 7 7"><circle cx="3" cy="3" r="3" fill="#c2c2c2"/><path d="M3 1.2 V3.6 M3 4.4 V5.2" stroke="#3c3f41" stroke-width="0.9"/></svg>
<svg style="left:210px;top:557px;" width="7" height="7" viewBox="0 0 7 7"><rect x="0" y="0" width="6.2" height="6.2" fill="#c2c2c2"/><path d="M1.1 1.4 L2.6 2.7 L1.1 4" fill="none" stroke="#3c3f41" stroke-width="0.7"/><path d="M3 4.6 H5" stroke="#3c3f41" stroke-width="0.6"/></svg>
<svg style="left:255px;top:557px;" width="9" height="7" viewBox="0 0 9 7"><path d="M0.6 6 A3.6 3.6 0 0 1 7.6 4.6" fill="none" stroke="#c2c2c2" stroke-width="0.9"/><path d="M3.6 5.8 L5.6 2.8" stroke="#c2c2c2" stroke-width="0.8"/><path d="M7.6 5 V6.6" stroke="#c2c2c2" stroke-width="0.8"/></svg>
<svg style="left:298.7px;top:556.6px;" width="7" height="7" viewBox="0 0 7 7"><rect x="0.4" y="1" width="6" height="5.6" fill="none" stroke="#c2c2c2" stroke-width="0.8"/><path d="M0.4 2.6 H6.4 M1.5 4 H5.3 M1.5 5.3 H5.3" stroke="#c2c2c2" stroke-width="0.6"/><path d="M1.8 0 V1.4 M5 0 V1.4" stroke="#c2c2c2" stroke-width="0.6"/></svg>
<svg style="left:330.8px;top:556.6px;" width="8" height="8" viewBox="0 0 8 8"><circle cx="3.3" cy="3.3" r="2.8" fill="none" stroke="#c2c2c2" stroke-width="0.9"/><path d="M5.2 5.2 L7.2 7.2" stroke="#c2c2c2" stroke-width="1.1"/><path d="M2 2.6 L3 3.6 L4.6 2" fill="none" stroke="#c2c2c2" stroke-width="0.6"/></svg>
<svg style="left:386.2px;top:556.8px;" width="7" height="7" viewBox="0 0 7 7"><circle cx="3.1" cy="3.1" r="3" fill="#c2c2c2"/><path d="M2.1 1.5 L4.6 3.1 L2.1 4.7 Z" fill="#3c3f41"/></svg>
<svg style="left:431px;top:556.6px;" width="6" height="7" viewBox="0 0 6 7"><rect x="0.4" y="0.4" width="5" height="6" fill="none" stroke="#bbb" stroke-width="0.7"/><path d="M1.6 2.2 H4.2 M1.6 3.6 H3.6" stroke="#bbb" stroke-width="0.5"/></svg>
<div class="t" style="left:440.30px;top:558.34px;font-size:6.8px;line-height:6.8px;color:#e8e8e8;">PreviewerLog</div>
<svg style="left:7.8px;top:569px;" width="8" height="7" viewBox="0 0 8 7"><rect x="1.6" y="0.4" width="5.6" height="4.6" rx="0.5" fill="none" stroke="#8d9092" stroke-width="0.8"/><path d="M0.4 2 V6.2 H5.4" fill="none" stroke="#8d9092" stroke-width="0.8"/></svg>
<div class="t" style="left:19.80px;top:568.64px;font-size:7.28px;line-height:7.28px;color:#bbbbbb;">Sync project finished in 49 s 975 ms (40 minutes ago)</div>
<div class="a" style="left:958.3px;top:569.6px;width:6.2px;height:6.2px;background:#4caf50;border-radius:50%"></div>
<div class="t" style="left:971.60px;top:568.87px;font-size:7.0px;line-height:7.0px;color:#bbbbbb;">4:35</div>
<div class="t" style="left:992.00px;top:568.87px;font-size:7.0px;line-height:7.0px;color:#bbbbbb;">LF</div>
<div class="t" style="left:1005.60px;top:568.87px;font-size:7.0px;line-height:7.0px;color:#bbbbbb;">UTF-8</div>
<div class="t" style="left:1031.00px;top:568.87px;font-size:7.0px;line-height:7.0px;color:#bbbbbb;">2 spaces</div>
<svg style="left:1066px;top:569.2px;" width="7" height="7" viewBox="0 0 7 7"><rect x="0.5" y="3" width="5" height="3.6" fill="#bbb"/><path d="M3.4 3 V1.6 Q3.4 0.4 4.6 0.4 Q5.8 0.4 5.8 1.6 V2.2" fill="none" stroke="#bbb" stroke-width="0.8"/></svg>
<svg style="left:11px;top:3.5px;" width="10" height="9" viewBox="0 0 10 9"><defs><linearGradient id="lg" x1="0" y1="0" x2="1" y2="0"><stop offset="0.3" stop-color="#27b4dc"/><stop offset="0.7" stop-color="#3a72d6"/></linearGradient></defs><path d="M3.8 6.6 L1 6.6 L4.6 1 L8.3 6.6 L5.5 6.6" fill="none" stroke="url(#lg)" stroke-width="1.8" stroke-linejoin="round" stroke-linecap="butt"/></svg>
<div class="t" style="left:30.00px;top:4.91px;font-size:7.2px;line-height:7.2px;color:#bbbbbb;"><u>F</u>ile</div>
<div class="t" style="left:47.00px;top:4.91px;font-size:7.2px;line-height:7.2px;color:#bbbbbb;"><u>E</u>dit</div>
<div class="t" style="left:67.00px;top:4.91px;font-size:7.2px;line-height:7.2px;color:#bbbbbb;"><u>V</u>iew</div>
<div class="t" style="left:89.00px;top:4.91px;font-size:7.2px;line-height:7.2px;color:#bbbbbb;"><u>N</u>avigate</div>
<div class="t" style="left:125.00px;top:4.91px;font-size:7.2px;line-height:7.2px;color:#bbbbbb;"><u>C</u>ode</div>
<div class="t" style="left:149.00px;top:4.91px;font-size:7.2px;line-height:7.2px;color:#bbbbbb;"><u>R</u>efactor</div>
<div class="t" style="left:183.30px;top:4.91px;font-size:7.2px;line-height:7.2px;color:#bbbbbb;"><u>B</u>uild</div>
<div class="t" style="left:206.00px;top:4.91px;font-size:7.2px;line-height:7.2px;color:#bbbbbb;">R<u>u</u>n</div>
<div class="t" style="left:225.70px;top:4.91px;font-size:7.2px;line-height:7.2px;color:#bbbbbb;"><u>T</u>ools</div>
<div class="t" style="left:250.70px;top:4.91px;font-size:7.2px;line-height:7.2px;color:#bbbbbb;">VC<u>S</u></div>
<div class="t" style="left:270.00px;top:4.91px;font-size:7.2px;line-height:7.2px;color:#bbbbbb;"><u>W</u>indow</div>
<div class="t" style="left:303.30px;top:4.91px;font-size:7.2px;line-height:7.2px;color:#bbbbbb;"><u>H</u>elp</div>
<div class="t" style="left:336.00px;top:4.41px;font-size:7.55px;line-height:7.55px;color:#888b8d;">HelloWorld - Index.ets [entry]</div>
<div class="a" style="left:1011px;top:7.8px;width:6px;height:1px;background:#9c9c9c;"></div>
<svg style="left:1037px;top:5px;" width="7" height="7" viewBox="0 0 7 7"><rect x="0.5" y="1.8" width="4.6" height="4.6" rx="0.6" fill="none" stroke="#9c9c9c" stroke-width="0.9"/><path d="M1.8 1.6 Q1.8 0.5 2.9 0.5 H5.4 Q6.4 0.5 6.4 1.5 V4 Q6.4 5.1 5.3 5.1" fill="none" stroke="#9c9c9c" stroke-width="0.8"/></svg>
<svg style="left:1063.8px;top:5px;" width="6" height="6" viewBox="0 0 6 6"><path d="M0.4 0.4 L5.6 5.6 M5.6 0.4 L0.4 5.6" stroke="#a0a0a0" stroke-width="0.8"/></svg>
<div class="t" style="left:11.70px;top:20.49px;font-size:7.45px;line-height:7.45px;color:#c8c8c8;font-weight:bold">HelloWorld</div>
<svg style="left:53px;top:20px;" width="4" height="8" viewBox="0 0 4 8"><path d="M0.8 0.5 L3.2 4 L0.8 7.5" fill="none" stroke="#6b6e70" stroke-width="0.7"/></svg>
<svg style="left:80.2px;top:20px;" width="4" height="8" viewBox="0 0 4 8"><path d="M0.8 0.5 L3.2 4 L0.8 7.5" fill="none" stroke="#6b6e70" stroke-width="0.7"/></svg>
<svg style="left:98.9px;top:20px;" width="4" height="8" viewBox="0 0 4 8"><path d="M0.8 0.5 L3.2 4 L0.8 7.5" fill="none" stroke="#6b6e70" stroke-width="0.7"/></svg>
<svg style="left:123.2px;top:20px;" width="4" height="8" viewBox="0 0 4 8"><path d="M0.8 0.5 L3.2 4 L0.8 7.5" fill="none" stroke="#6b6e70" stroke-width="0.7"/></svg>
<svg style="left:141.2px;top:20px;" width="4" height="8" viewBox="0 0 4 8"><path d="M0.8 0.5 L3.2 4 L0.8 7.5" fill="none" stroke="#6b6e70" stroke-width="0.7"/></svg>
<svg style="left:171.7px;top:20px;" width="4" height="8" viewBox="0 0 4 8"><path d="M0.8 0.5 L3.2 4 L0.8 7.5" fill="none" stroke="#6b6e70" stroke-width="0.7"/></svg>
<div class="t" style="left:60.00px;top:20.62px;font-size:7.3px;line-height:7.3px;color:#c8c8c8;font-weight:bold">entry</div>
<div class="t" style="left:87.00px;top:20.62px;font-size:7.3px;line-height:7.3px;color:#bbbbbb;">src</div>
<div class="t" style="left:105.50px;top:20.62px;font-size:7.3px;line-height:7.3px;color:#bbbbbb;">main</div>
<div class="t" style="left:130.00px;top:20.62px;font-size:7.3px;line-height:7.3px;color:#bbbbbb;">ets</div>
<div class="t" style="left:148.70px;top:20.62px;font-size:7.3px;line-height:7.3px;color:#bbbbbb;">pages</div>
<svg style="left:175.8px;top:19.6px;" width="9" height="10" viewBox="0 0 9 10"><path d="M3.2 0.6 H7.3 V4.6 H1.2 V2.5 Z" fill="#a9b3ba"/><path d="M1.5 2.6 H7 M1.5 3.7 H7" stroke="#7b858c" stroke-width="0.4"/><rect x="0.4" y="5" width="7.8" height="3.7" fill="#3a9fd1"/><path d="M1.8 6.9 H3.2 M4.2 6.3 V7.6 M5.6 6.4 H6.9 M5.6 7.4 H6.9" stroke="#1f5c7c" stroke-width="0.6"/></svg>
<div class="t" style="left:186.70px;top:20.62px;font-size:7.3px;line-height:7.3px;color:#bbbbbb;">Index.ets</div>
<svg style="left:833px;top:20px;" width="8" height="8" viewBox="0 0 8 8"><circle cx="4" cy="4" r="3" fill="none" stroke="#bbb" stroke-width="1"/><circle cx="4" cy="4" r="1.2" fill="#bbb"/></svg>
<div class="a" style="left:847px;top:18px;width:47.5px;height:12.5px;background:#3c3f41;border:1px solid #515456;border-radius:2px"></div>
<svg style="left:852px;top:20px;" width="9" height="9" viewBox="0 0 9 9"><path d="M3.5 0.5 L6 4.5 H1 Z" fill="#d0d0d0"/><rect x="0.5" y="5" width="3.5" height="3.5" fill="#d0d0d0"/><rect x="4.8" y="5" width="3.7" height="3.7" fill="#f0c000"/></svg>
<div class="t" style="left:864.00px;top:20.82px;font-size:7.3px;line-height:7.3px;color:#bbbbbb;">entry</div>
<svg style="left:884px;top:23px;" width="5" height="3" viewBox="0 0 5 3"><path d="M0 0 H5 L2.5 3 Z" fill="#bbb"/></svg>
<div class="a" style="left:899px;top:18px;width:57px;height:12.5px;background:#3c3f41;border:1px solid #515456;border-radius:2px"></div>
<div class="t" style="left:904.50px;top:20.82px;font-size:7.3px;line-height:7.3px;color:#bbbbbb;">No Devices</div>
<svg style="left:946px;top:23px;" width="5" height="3" viewBox="0 0 5 3"><path d="M0 0 H5 L2.5 3 Z" fill="#bbb"/></svg>
<svg style="left:963px;top:20px;" width="6" height="8" viewBox="0 0 6 8"><path d="M0.5 0.5 L5.5 4 L0.5 7.5 Z" fill="#4da552"/></svg>
<svg style="left:976.5px;top:19.6px;" width="8" height="9" viewBox="0 0 8 9"><path d="M2 0.5 L2.8 1.8 M6 0.5 L5.2 1.8" stroke="#4caf50" stroke-width="0.9"/><ellipse cx="4" cy="5.2" rx="3" ry="3.3" fill="#4caf50"/><path d="M0.3 3.6 H1.2 M6.8 3.6 H7.7 M0.3 6.6 H1.2 M6.8 6.6 H7.7" stroke="#4caf50" stroke-width="0.8"/><path d="M4 3.2 V7.6" stroke="#2f6b33" stroke-width="0.6"/></svg>
<svg style="left:991.3px;top:19.6px;" width="9" height="9" viewBox="0 0 9 9"><path d="M2 0.5 L2.8 1.8 M6 0.5 L5.2 1.8" stroke="#4caf50" stroke-width="0.9"/><path d="M6.9 4.2 A3 3.3 0 1 0 4.5 8.5 L4.4 5.6 Q4.6 4 6.9 4.2 Z" fill="#4caf50"/><path d="M0.3 3.6 H1.2 M0.3 6.6 H1.2" stroke="#4caf50" stroke-width="0.8"/><rect x="5.6" y="5.2" width="2.8" height="2.8" fill="#d8d8d8"/><circle cx="4.8" cy="8.6" r="0.8" fill="#d8d8d8"/></svg>
<div class="a" style="left:1006.5px;top:21px;width:6px;height:6px;background:#5a5c5e;"></div>
<div class="a" style="left:1018.5px;top:18px;width:1px;height:12px;background:#4a4d4f;"></div>
<svg style="left:1023px;top:19.5px;" width="10" height="9" viewBox="0 0 10 9"><path d="M0.5 1 H3.5 L4.5 2 H7 V8 H0.5 Z" fill="#bfc3c6"/><rect x="5.5" y="4.5" width="4" height="4" fill="#3592c4"/></svg>
<svg style="left:1038px;top:20px;" width="9" height="9" viewBox="0 0 9 9"><circle cx="3.5" cy="3.5" r="2.6" fill="none" stroke="#ccc" stroke-width="1.1"/><path d="M5.4 5.4 L8.3 8.3" stroke="#ccc" stroke-width="1.3"/></svg>
<svg style="left:1053px;top:20px;" width="8" height="8" viewBox="0 0 8 8"><polygon points="2.55,1.49 3.24,0.07 4.76,0.07 5.45,1.49 7.02,1.38 7.78,2.70 6.90,4.00 7.78,5.30 7.02,6.62 5.45,6.51 4.76,7.93 3.24,7.93 2.55,6.51 0.98,6.62 0.22,5.30 1.10,4.00 0.22,2.70 0.98,1.38" fill="#ccc"/><circle cx="4" cy="4" r="1.2" fill="#3c3f41"/></svg>
<svg style="left:1067px;top:19.5px;" width="9" height="9" viewBox="0 0 9 9"><circle cx="4.5" cy="4.5" r="4" fill="none" stroke="#bbb" stroke-width="0.9"/><circle cx="4.5" cy="3.5" r="1.4" fill="none" stroke="#bbb" stroke-width="0.9"/><path d="M2 7.3 Q4.5 4.8 7 7.3" fill="none" stroke="#bbb" stroke-width="0.9"/></svg>
</body></html>
